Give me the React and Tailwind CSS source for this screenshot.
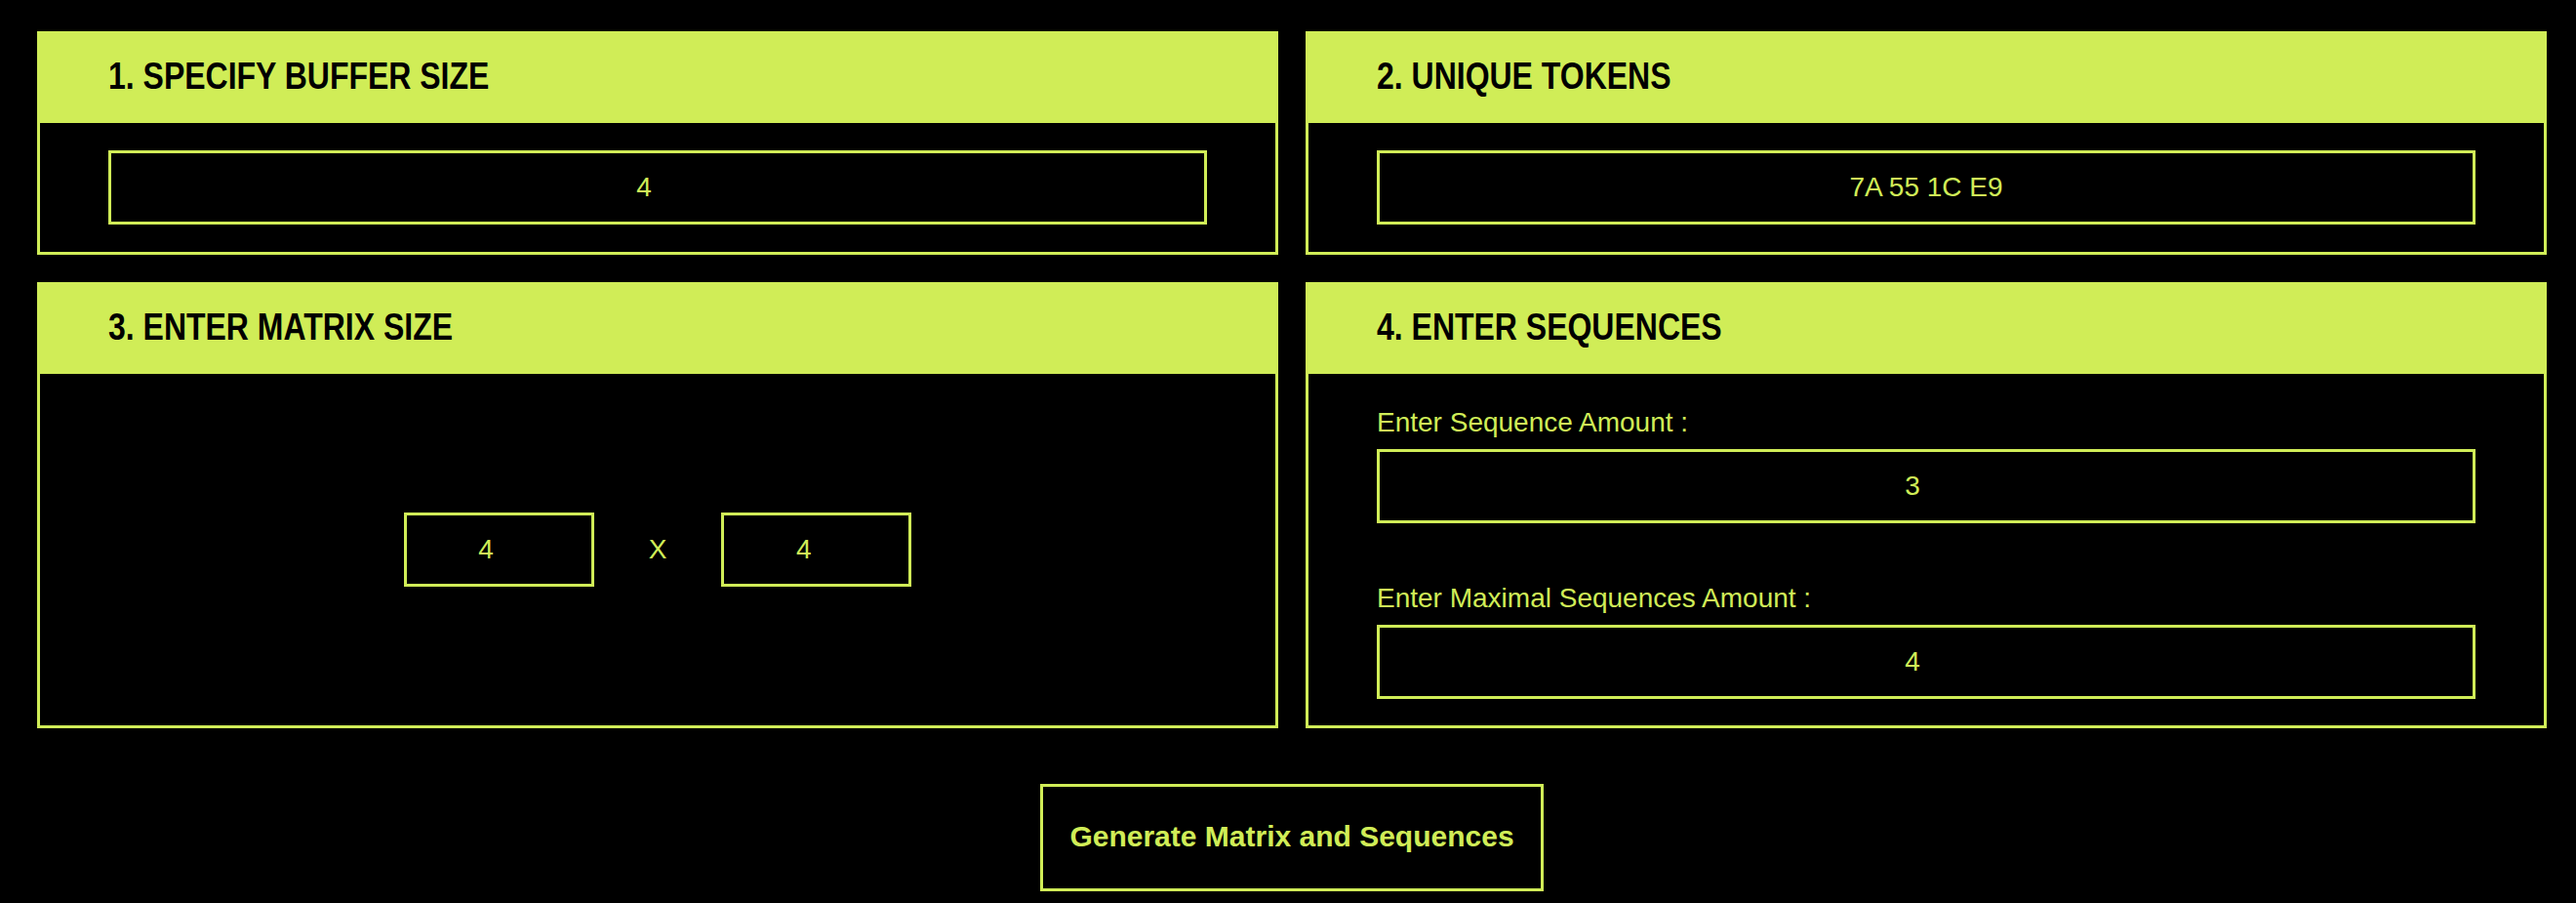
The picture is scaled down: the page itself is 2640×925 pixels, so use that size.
import React from "react";

function Card({ title, children, bodyClass }) {
  return (
    <div className="flex flex-col">
      <div className="h-[94px] bg-[#d0ed57] flex items-center pl-[73px] pb-[3px]">
        <h2 className="inline-block origin-left scale-x-[0.82] whitespace-nowrap font-['Liberation_Sans',Arial,sans-serif] font-bold text-[39px] leading-none text-black">
          {title}
        </h2>
      </div>
      <div className={"flex-1 border-[3px] border-t-0 border-[#d0ed57] " + bodyClass}>{children}</div>
    </div>
  );
}

function Field({ value, className = "" }) {
  return (
    <input
      readOnly
      value={value}
      className={
        "h-[76px] border-[3px] border-[#d0ed57] bg-black text-[#d0ed57] text-center text-[28px] font-['Liberation_Sans',Arial,sans-serif] outline-none " +
        className
      }
    />
  );
}

export default function App() {
  return (
    <div className="h-[925px] overflow-hidden bg-black pl-[38px] pr-[30px] pt-[32px] font-['Liberation_Sans',Arial,sans-serif]">
      <div className="grid grid-cols-2 gap-[28px]">
        <Card title="1. SPECIFY BUFFER SIZE" bodyClass="px-[70px] py-[28px]">
          <Field value="4" className="w-full block pr-[28px]" />
        </Card>
        <Card title="2. UNIQUE TOKENS" bodyClass="px-[70px] py-[28px]">
          <Field value="7A 55 1C E9" className="w-full block" />
        </Card>
        <Card title="3. ENTER MATRIX SIZE" bodyClass="flex items-center justify-center gap-[56px]">
          <Field value="4" className="w-[195px] pr-[26px]" />
          <span className="text-[28px] leading-[34px] text-[#d0ed57]">X</span>
          <Field value="4" className="w-[195px] pr-[26px]" />
        </Card>
        <Card title="4. ENTER SEQUENCES" bodyClass="px-[70px] pt-[33px] pb-[27px] flex flex-col">
          <label className="text-[28px] leading-[34px] text-[#d0ed57]">Enter Sequence Amount :</label>
          <Field value="3" className="w-full block mt-[10px] pr-[28px]" />
          <label className="text-[28px] leading-[34px] text-[#d0ed57] mt-[60px]">Enter Maximal Sequences Amount :</label>
          <Field value="4" className="w-full block mt-[10px] pr-[28px]" />
        </Card>
      </div>
      <div className="flex justify-center mt-[57px]">
        <button className="w-[516px] h-[110px] pb-[4px] border-[3px] border-[#d0ed57] bg-black text-[#d0ed57] text-[30px] font-bold font-['Liberation_Sans',Arial,sans-serif]">
          Generate Matrix and Sequences
        </button>
      </div>
    </div>
  );
}
